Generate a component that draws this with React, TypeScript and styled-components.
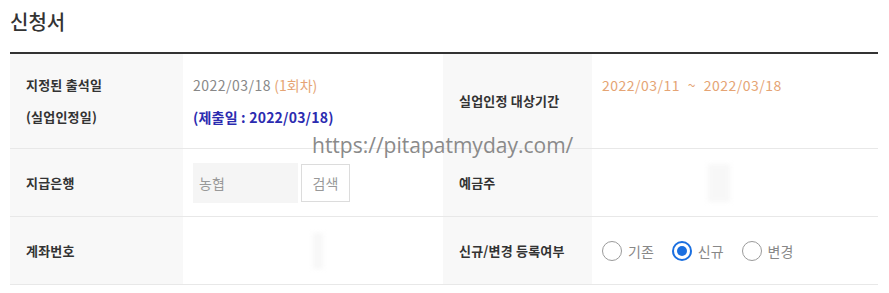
import React from 'react';
import styled, { createGlobalStyle } from 'styled-components';

const GlobalStyle = createGlobalStyle`
  html, body {
    margin: 0;
    padding: 0;
    background: #fff;
  }
  body {
    font-family: "Noto Sans CJK KR", "Noto Sans", sans-serif;
    color: #333;
  }
`;

const Page = styled.div`
  position: relative;
  width: 868px;
  padding: 10px 11px 0 10px;
`;

const Title = styled.h2`
  margin: 0 0 18px;
  font-size: 20px;
  line-height: 24px;
  font-weight: 500;
  color: #333;
`;

const Table = styled.div`
  display: grid;
  grid-template-columns: 173px 260px 149px 286px;
  grid-template-rows: 95px 68px 68px;
  border-top: 2px solid #333;
`;

const LabelCell = styled.div<{ $top?: boolean }>`
  box-sizing: border-box;
  display: flex;
  flex-direction: column;
  justify-content: ${(p) => (p.$top ? 'flex-start' : 'center')};
  padding: ${(p) => (p.$top ? '15px 16px' : '0 16px')};
  background: #f8f8f8;
  border-bottom: 1px solid #e8e8e8;
  font-size: 13px;
  line-height: 32px;
  font-weight: 700;
  color: #333;
  letter-spacing: 0.2px;
`;

const ValueCell = styled.div<{ $top?: boolean }>`
  box-sizing: border-box;
  display: flex;
  flex-direction: ${(p) => (p.$top ? 'column' : 'row')};
  align-items: ${(p) => (p.$top ? 'flex-start' : 'center')};
  padding: ${(p) => (p.$top ? '15px 10px' : '0 10px')};
  background: #fff;
  border-bottom: 1px solid #e8e8e8;
  font-size: 14px;
  line-height: 32px;
  color: #888;
`;

const Digits = styled.span`
  letter-spacing: 0.5px;
`;

const Orange = styled.span`
  color: #e5a474;
`;

const SubmitDate = styled.span`
  color: #2b2bb0;
  font-weight: 700;
  letter-spacing: 0.2px;
`;

const Period = styled.span`
  color: #e5a474;
  letter-spacing: 0.5px;
  word-spacing: 4px;
`;

const BankInput = styled.div`
  box-sizing: border-box;
  width: 105px;
  height: 40px;
  padding-left: 6px;
  background: #f5f5f5;
  display: flex;
  align-items: center;
  color: #999;
  font-size: 14px;
`;

const SearchButton = styled.button`
  box-sizing: border-box;
  margin-left: 3px;
  width: 49px;
  height: 38px;
  border: 1px solid #dcdcdc;
  background: #fff;
  color: #999;
  font-family: inherit;
  font-size: 14px;
  padding: 0;
`;

const Masked = styled.div<{ $w: number; $h: number; $ml: number }>`
  width: ${(p) => p.$w}px;
  height: ${(p) => p.$h}px;
  margin-left: ${(p) => p.$ml}px;
  background: #f4f4f4;
  filter: blur(2px);
  opacity: 0.7;
`;

const RadioGroup = styled.div`
  display: flex;
  align-items: center;
  gap: 18px;
`;

const RadioItem = styled.label`
  display: flex;
  align-items: center;
  gap: 6px;
  color: #888;
  font-size: 14px;
`;

const RadioCircle = styled.span<{ $checked?: boolean }>`
  box-sizing: border-box;
  width: 20px;
  height: 20px;
  border-radius: 50%;
  border: ${(p) => (p.$checked ? '2px solid #1a6fe0' : '1px solid #9a9a9a')};
  display: flex;
  align-items: center;
  justify-content: center;
  &::after {
    content: '';
    display: ${(p) => (p.$checked ? 'block' : 'none')};
    width: 10px;
    height: 10px;
    border-radius: 50%;
    background: #1a6fe0;
  }
`;

const Watermark = styled.div`
  position: absolute;
  left: 312px;
  top: 131px;
  font-family: "Open Sans", sans-serif;
  font-size: 21px;
  line-height: 28px;
  color: #8a8a8a;
  pointer-events: none;
`;

const radios = [
  { label: '기존', checked: false },
  { label: '신규', checked: true },
  { label: '변경', checked: false },
];

export default function App() {
  return (
    <>
      <GlobalStyle />
      <Page>
        <Title>신청서</Title>
        <Table>
          <LabelCell $top>
            <span>지정된 출석일</span>
            <span>(실업인정일)</span>
          </LabelCell>
          <ValueCell $top>
            <span>
              <Digits>2022/03/18</Digits> <Orange>(1회차)</Orange>
            </span>
            <SubmitDate>(제출일 : 2022/03/18)</SubmitDate>
          </ValueCell>
          <LabelCell>실업인정 대상기간</LabelCell>
          <ValueCell $top>
            <Period>2022/03/11 ~ 2022/03/18</Period>
          </ValueCell>

          <LabelCell>지급은행</LabelCell>
          <ValueCell>
            <BankInput>농협</BankInput>
            <SearchButton>검색</SearchButton>
          </ValueCell>
          <LabelCell>예금주</LabelCell>
          <ValueCell>
            <Masked $w={22} $h={38} $ml={106} />
          </ValueCell>

          <LabelCell>계좌번호</LabelCell>
          <ValueCell>
            <Masked $w={10} $h={36} $ml={120} />
          </ValueCell>
          <LabelCell>신규/변경 등록여부</LabelCell>
          <ValueCell>
            <RadioGroup>
              {radios.map((r) => (
                <RadioItem key={r.label}>
                  <RadioCircle $checked={r.checked} />
                  {r.label}
                </RadioItem>
              ))}
            </RadioGroup>
          </ValueCell>
        </Table>
        <Watermark>https://pitapatmyday.com/</Watermark>
      </Page>
    </>
  );
}
